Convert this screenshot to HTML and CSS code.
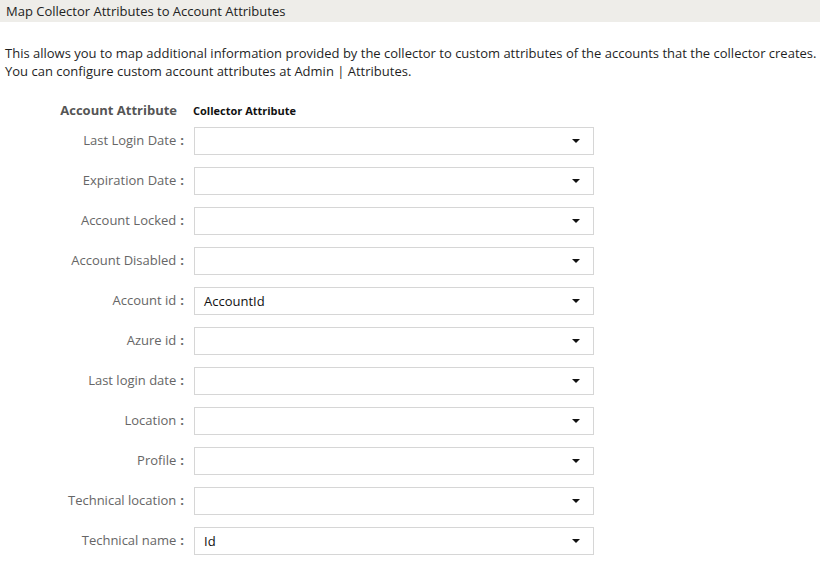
FILE: index.html
```html
<!DOCTYPE html>
<html>
<head>
<meta charset="utf-8">
<link rel="stylesheet" href="styles.css">
</head>
<body>
<div class="header">Map Collector Attributes to Account Attributes</div>
<p class="desc">This allows you to map additional information provided by the collector to custom attributes of the accounts that the collector creates.<br>You can configure custom account attributes at Admin | Attributes.</p>
<div class="form">
  <div class="row head">
    <div class="label-col"><span class="acc-head">Account Attribute</span></div>
    <div class="coll-head">Collector Attribute</div>
  </div>
  <div class="row"><div class="label-col">Last Login Date<span class="colon">:</span></div><div class="select"><span class="val"></span><span class="arrow"></span></div></div>
  <div class="row"><div class="label-col">Expiration Date<span class="colon">:</span></div><div class="select"><span class="val"></span><span class="arrow"></span></div></div>
  <div class="row"><div class="label-col">Account Locked<span class="colon">:</span></div><div class="select"><span class="val"></span><span class="arrow"></span></div></div>
  <div class="row"><div class="label-col">Account Disabled<span class="colon">:</span></div><div class="select"><span class="val"></span><span class="arrow"></span></div></div>
  <div class="row"><div class="label-col">Account id<span class="colon">:</span></div><div class="select"><span class="val">AccountId</span><span class="arrow"></span></div></div>
  <div class="row"><div class="label-col">Azure id<span class="colon">:</span></div><div class="select"><span class="val"></span><span class="arrow"></span></div></div>
  <div class="row"><div class="label-col">Last login date<span class="colon">:</span></div><div class="select"><span class="val"></span><span class="arrow"></span></div></div>
  <div class="row"><div class="label-col">Location<span class="colon">:</span></div><div class="select"><span class="val"></span><span class="arrow"></span></div></div>
  <div class="row"><div class="label-col">Profile<span class="colon">:</span></div><div class="select"><span class="val"></span><span class="arrow"></span></div></div>
  <div class="row"><div class="label-col">Technical location<span class="colon">:</span></div><div class="select"><span class="val"></span><span class="arrow"></span></div></div>
  <div class="row"><div class="label-col">Technical name<span class="colon">:</span></div><div class="select"><span class="val">Id</span><span class="arrow"></span></div></div>
</div>
</body>
</html>
```

FILE: styles.css
```css
html, body { margin: 0; padding: 0; background: #fff; }
body {
  font-family: "Open Sans", "Noto Sans", sans-serif;
  font-size: 13px;
  color: #222;
}
.header {
  background: #eeede9;
  height: 22px;
  line-height: 22px;
  padding-left: 6px;
  color: #222;
}
.desc {
  margin: 22px 0 0 5px;
  line-height: 18px;
  color: #1f1f1f;
}
.form {
  margin-top: 17px;
  display: flex;
  flex-direction: column;
  gap: 12px;
}
.row {
  display: flex;
  align-items: center;
  height: 28px;
}
.row.head {
  height: 20px;
  margin-top: 4px;
  margin-bottom: -6px;
}
.label-col {
  width: 184px;
  margin-right: 10px;
  text-align: right;
  color: #666;
  white-space: nowrap;
  padding-bottom: 3px;
}
.colon {
  font-weight: bold;
  margin-left: 4px;
  color: #666;
}
.acc-head {
  font-weight: bold;
  font-size: 13px;
  color: #555;
  margin-right: 7px;
}
.coll-head {
  font-weight: bold;
  font-size: 11px;
  color: #111;
  margin-left: -1px;
  padding-bottom: 1px;
}
.select {
  width: 400px;
  height: 28px;
  box-sizing: border-box;
  border: 1px solid #d6d6d6;
  display: flex;
  align-items: center;
  justify-content: space-between;
  padding: 0 13px 0 9px;
  color: #111;
}
.arrow {
  width: 0;
  height: 0;
  border-left: 4px solid transparent;
  border-right: 4px solid transparent;
  border-top: 4px solid #111;
}
```
